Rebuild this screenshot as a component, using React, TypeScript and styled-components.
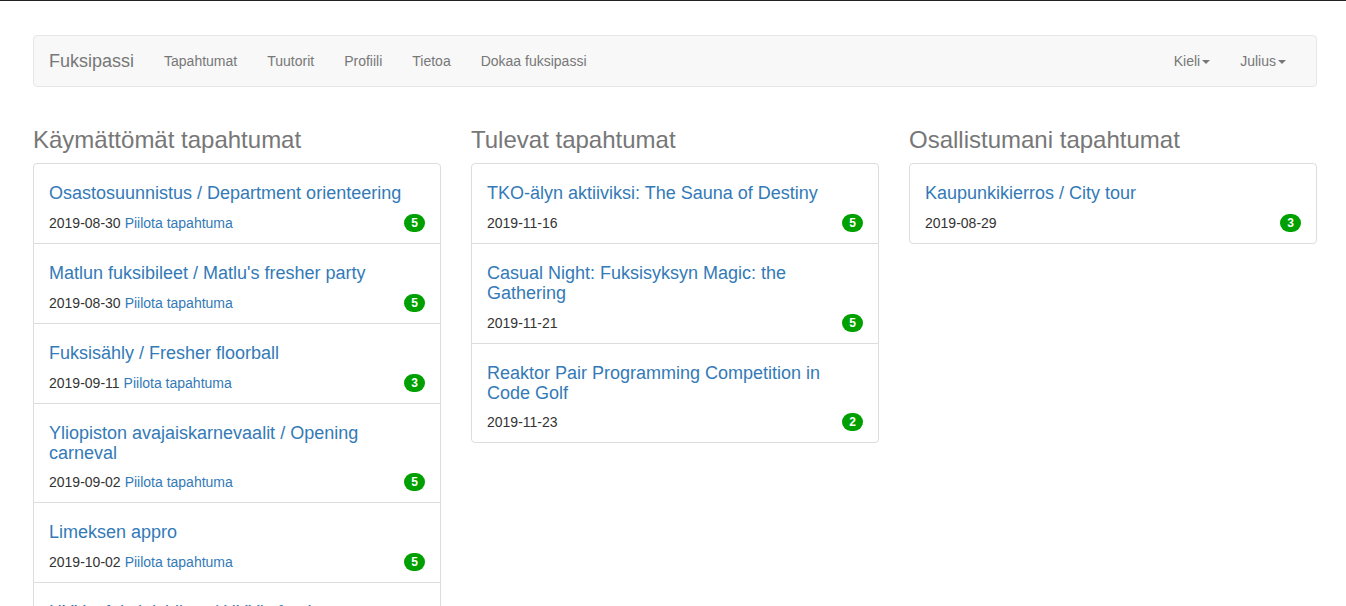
import React from "react";
import styled, { createGlobalStyle } from "styled-components";

const Global = createGlobalStyle`
  html, body { margin: 0; padding: 0; background: #fff; }
  body {
    border-top: 1px solid #222;
    font-family: "Liberation Sans", Arial, Helvetica, sans-serif;
    font-size: 14px;
    line-height: 1.42857143;
    color: #333;
  }
  * { box-sizing: border-box; }
`;

const Page = styled.div`
  padding: 34px 29px 0 33px;
`;

const Navbar = styled.nav`
  display: flex;
  align-items: stretch;
  height: 52px;
  background: #f8f8f8;
  border: 1px solid #e7e7e7;
  border-radius: 4px;
  padding: 0 15px;
  margin-bottom: 20px;
`;

const Brand = styled.a`
  font-size: 18px;
  line-height: 20px;
  padding: 15px 15px 15px 0;
  color: #777;
  text-decoration: none;
`;

const NavList = styled.ul<{ $right?: boolean }>`
  display: flex;
  list-style: none;
  margin: 0;
  padding: 0;
  margin-left: ${(p) => (p.$right ? "auto" : "0")};
`;

const NavLink = styled.a`
  display: block;
  padding: 15px;
  line-height: 20px;
  font-size: 14px;
  color: #777;
  text-decoration: none;
`;

const Caret = styled.span`
  display: inline-block;
  width: 0;
  height: 0;
  margin-left: 2px;
  vertical-align: middle;
  border-top: 4px solid #777;
  border-right: 4px solid transparent;
  border-left: 4px solid transparent;
`;

const Columns = styled.div`
  display: grid;
  grid-template-columns: repeat(3, 1fr);
  column-gap: 30px;
  align-items: start;
`;

const Heading = styled.h3`
  font-size: 24px;
  font-weight: 500;
  line-height: 1.1;
  color: #777;
  margin: 20px 0 10px;
`;

const ListGroup = styled.div`
  display: flex;
  flex-direction: column;
`;

const Item = styled.div`
  border: 1px solid #ddd;
  margin-bottom: -1px;
  padding: 10px 15px;
  background: #fff;
  &:first-child { border-top-left-radius: 4px; border-top-right-radius: 4px; }
  &:last-child { margin-bottom: 0; border-bottom-left-radius: 4px; border-bottom-right-radius: 4px; }
`;

const Title = styled.h4`
  margin: 10px 0 9px;
  font-size: 18px;
  font-weight: 500;
  line-height: 1.1;
  color: #337ab7;
`;

const Meta = styled.div`
  display: flex;
  align-items: center;
  line-height: 20px;
  color: #333;
`;

const Hide = styled.a`
  color: #337ab7;
  text-decoration: none;
  margin-left: 4px;
`;

const Badge = styled.span`
  margin-left: auto;
  display: inline-block;
  min-width: 10px;
  padding: 3px 7px;
  font-size: 12px;
  font-weight: bold;
  line-height: 1;
  color: #fff;
  text-align: center;
  background: #00a000;
  border-radius: 10px;
`;

type Ev = { title: string; date: string; n: number };

const missed: Ev[] = [
  { title: "Osastosuunnistus / Department orienteering", date: "2019-08-30", n: 5 },
  { title: "Matlun fuksibileet / Matlu's fresher party", date: "2019-08-30", n: 5 },
  { title: "Fuksisähly / Fresher floorball", date: "2019-09-11", n: 3 },
  { title: "Yliopiston avajaiskarnevaalit / Opening carneval", date: "2019-09-02", n: 5 },
  { title: "Limeksen appro", date: "2019-10-02", n: 5 },
  { title: "HYY:n fuksiaisbileet / HYY's fresher party", date: "2019-10-05", n: 5 },
];

const upcoming: Ev[] = [
  { title: "TKO-älyn aktiiviksi: The Sauna of Destiny", date: "2019-11-16", n: 5 },
  { title: "Casual Night: Fuksisyksyn Magic: the Gathering", date: "2019-11-21", n: 5 },
  { title: "Reaktor Pair Programming Competition in Code Golf", date: "2019-11-23", n: 2 },
];

const attended: Ev[] = [
  { title: "Kaupunkikierros / City tour", date: "2019-08-29", n: 3 },
];

function Column({ heading, events, hideLink }: { heading: string; events: Ev[]; hideLink?: boolean }) {
  return (
    <div>
      <Heading>{heading}</Heading>
      <ListGroup>
        {events.map((e) => (
          <Item key={e.title}>
            <Title>{e.title}</Title>
            <Meta>
              <span>{e.date}</span>
              {hideLink && <Hide href="#">Piilota tapahtuma</Hide>}
              <Badge>{e.n}</Badge>
            </Meta>
          </Item>
        ))}
      </ListGroup>
    </div>
  );
}

export default function App() {
  return (
    <>
      <Global />
      <Page>
        <Navbar>
          <Brand href="#">Fuksipassi</Brand>
          <NavList>
            <li><NavLink href="#">Tapahtumat</NavLink></li>
            <li><NavLink href="#">Tuutorit</NavLink></li>
            <li><NavLink href="#">Profiili</NavLink></li>
            <li><NavLink href="#">Tietoa</NavLink></li>
            <li><NavLink href="#">Dokaa fuksipassi</NavLink></li>
          </NavList>
          <NavList $right>
            <li><NavLink href="#">Kieli<Caret /></NavLink></li>
            <li><NavLink href="#">Julius<Caret /></NavLink></li>
          </NavList>
        </Navbar>
        <Columns>
          <Column heading="Käymättömät tapahtumat" events={missed} hideLink />
          <Column heading="Tulevat tapahtumat" events={upcoming} />
          <Column heading="Osallistumani tapahtumat" events={attended} />
        </Columns>
      </Page>
    </>
  );
}
